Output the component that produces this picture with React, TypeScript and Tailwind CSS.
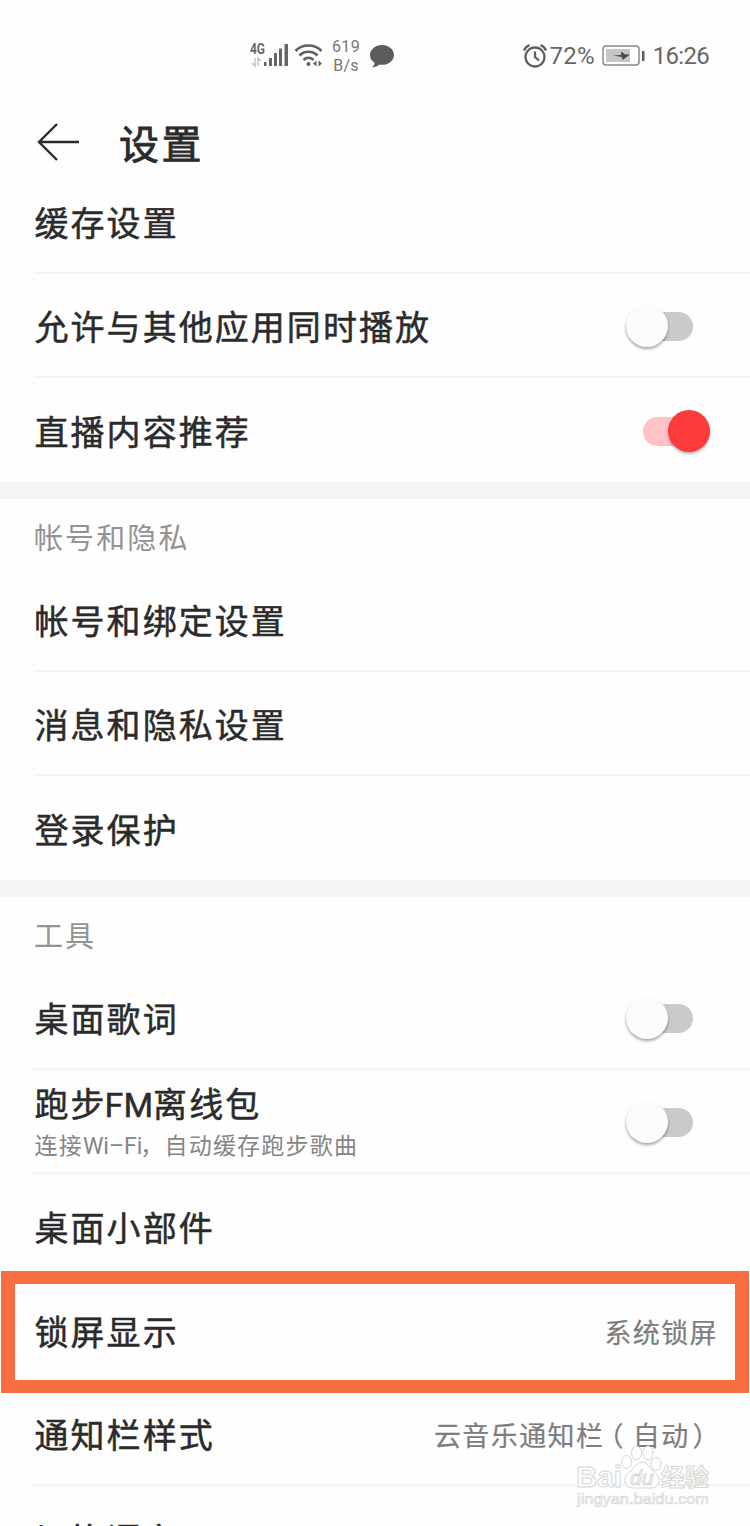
import type { ReactNode } from 'react';

type RowProps = {
	title: ReactNode;
	subtitle?: ReactNode;
	last?: boolean;
	children?: ReactNode;
};

const Toggle = ({ on }: { on?: boolean }) => {
	return on ? (
		<div className="mr-10 mt-[2px] flex h-[29px] w-[67px] items-center justify-end rounded-full bg-[#ffc3c6]">
			<div className="h-[42px] w-[42px] shrink-0 rounded-full bg-[#fd3b3b] shadow-[0_2px_3px_rgba(0,0,0,0.28)]" />
		</div>
	) : (
		<div className="mr-[57px] mt-[2px] flex h-[29px] w-[67px] items-center rounded-full bg-[#cacaca]">
			<div className="h-[42px] w-[42px] shrink-0 rounded-full bg-[#fcfcfc] shadow-[0_2px_3px_rgba(0,0,0,0.35)]" />
		</div>
	);
};

const Row = ({ title, subtitle, last, children }: RowProps) => {
	return (
		<div
			className={
				last
					? 'ml-[34px] flex h-[104px] items-center justify-between'
					: 'ml-[34px] flex h-[104px] items-center justify-between border-b-2 border-[#f5f5f5]'
			}
		>
			<div className="mt-[6px] flex flex-col whitespace-nowrap pl-[0.5px]">
				<span className="text-[34px] leading-[44px] tracking-[2.05px] text-[#2b2b2b] [-webkit-text-stroke:0.5px_#2b2b2b]">
					{title}
				</span>
				{subtitle && (
					<span className="mt-[2px] text-[23px] leading-[36px] tracking-[1.2px] text-[#858585]">
						{subtitle}
					</span>
				)}
			</div>
			{children}
		</div>
	);
};

const SectionLabel = ({ children }: { children: ReactNode }) => {
	return (
		<div className="border-t-[17px] border-[#f4f4f4]">
			<h2 className="flex h-[69px] items-center pl-[34px] pt-[13px] text-[29px] tracking-[2.1px] text-[#939393]">
				{children}
			</h2>
		</div>
	);
};

const Value = ({ children }: { children: ReactNode }) => {
	return (
		<span className="mr-[32px] mt-[8px] whitespace-nowrap text-[27px] tracking-[1.4px] text-[#7d7d7d] [-webkit-text-stroke:0.2px_#7d7d7d]">
			{children}
		</span>
	);
};

const StatusBar = () => {
	return (
		<div className="flex h-28 items-center justify-between pl-[249px] pr-[41px] font-[Roboto] text-[#666]">
			<div className="flex items-center">
				<svg width="40" height="28" viewBox="0 0 40 28" fill="#666">
					<text x="1" y="12" fontSize="14" fontWeight="700" textLength="15" lengthAdjust="spacingAndGlyphs">
						4G
					</text>
					<path d="M6 16v8l-3-3M9 24v-8l3 3" fill="none" stroke="#c4c4c4" strokeWidth="1.5" />
					<path d="M15 20h2.500v4H15zM20 16h3v8h-3zM25 11h3v13h-3zM30 6.500h3V24h-3zM35.500 2H39v22h-3.500z" />
				</svg>
				<svg className="ml-1" width="32" height="28" viewBox="0 0 32 28" fill="none" stroke="#606060" strokeWidth="2.600">
					<path d="M2.500 9c7-7.300 19-7.300 26 0M6.500 13.500c5-5 13-5 18 0M10.500 18c3-2.800 7-2.800 10 0" />
					<circle cx="15.500" cy="22" r="2" fill="#606060" stroke="none" />
					<path d="M23.500 18.500v6l-3.500-3zM25.500 18.500v6l3.500-3z" fill="#606060" stroke="none" />
				</svg>
				<div className="ml-[7px] flex w-7 flex-col text-center text-[16px] leading-[19px] tracking-[0.3px] text-[#777]">
					<span>619</span>
					<span>B/s</span>
				</div>
				<svg className="ml-[9px]" width="26" height="26" viewBox="0 0 26 26" fill="#5c5c5c">
					<path d="M13 2C6.400 2 1 6.500 1 12c0 3.300 1.700 6 4.600 7.800 0 1.700-1 3.200-2.600 4.400 3.200.2 5.700-.9 7.500-2.600.8.200 1.700.2 2.500.2 6.600 0 12-4.400 12-9.900S19.600 2 13 2z" />
				</svg>
			</div>
			<div className="flex items-center">
				<svg width="26" height="26" viewBox="0 0 26 26" fill="none" stroke="#606060" strokeWidth="2.300">
					<circle cx="13" cy="14" r="9.500" />
					<path d="M13 8.500V14l4 3.500M2 7.500C3 5 5 3 7.500 2.200M24 7.500C23 5 21 3 18.500 2.200" />
				</svg>
				<span className="ml-[2px] text-[24px] tracking-[0.2px]">72%</span>
				<svg className="ml-[7px]" width="44" height="22" viewBox="0 0 44 22">
					<rect x="1" y="1" width="36" height="19" rx="3" fill="#fff" stroke="#8a8a8a" strokeWidth="1.500" />
					<rect x="4" y="4" width="24" height="13" fill="#c6c6c6" />
					<path d="M11 10.500 19 10l.500-3.500 3.500 3h5L20.500 15l-.500-3z" fill="#484848" />
					<path d="M40 6h2.500v10H40z" fill="#606060" />
				</svg>
				<span className="ml-[7px] text-[24px] tracking-[-0.7px]">16:26</span>
			</div>
		</div>
	);
};

const Watermark = () => {
	return (
		<svg
			className="absolute right-[38px] top-[57px]"
			width="138"
			height="72"
			viewBox="0 0 138 72"
			fill="#fefefe"
			stroke="#d6d6d6"
			strokeWidth="1"
			fontFamily="'Liberation Sans', 'Noto Sans CJK SC', sans-serif"
		>
			<text x="2" y="48" fontSize="30" fontWeight="700" textLength="46" lengthAdjust="spacingAndGlyphs">
				Bai
			</text>
			<ellipse cx="52.500" cy="23" rx="5" ry="6.500" />
			<ellipse cx="62.500" cy="14" rx="5" ry="7" />
			<ellipse cx="74" cy="14" rx="5" ry="7" />
			<ellipse cx="82" cy="25" rx="5" ry="6.500" />
			<path d="M68 23c-6 0-7 6-11 9-5 3-7 6-6 11 1 7 8 6 17 6s16 1 17-6c1-5-2-8-6-11-4-3-5-9-11-9z" />
			<text x="56" y="46" fontSize="21" fontStyle="italic">
				du
			</text>
			<text x="87" y="47" fontSize="24" fontWeight="700">
				经验
			</text>
			<text x="3" y="65" fontSize="15" strokeWidth="0.700" textLength="132" lengthAdjust="spacingAndGlyphs">
				jingyan.baidu.com
			</text>
		</svg>
	);
};

const App = () => {
	return (
		<div className="h-[1526px] w-[750px] overflow-hidden bg-[#fefefe] font-[Roboto,'Noto_Sans_CJK_SC',sans-serif]">
			<StatusBar />
			<header className="flex h-[58px] items-center pl-[37px]">
				<svg className="mt-[2px]" width="43" height="38" viewBox="0 0 43 38" fill="none" stroke="#2b2b2b" strokeWidth="2.400">
					<path d="M42 19H2M20 1 2 19l18 18" />
				</svg>
				<h1 className="ml-[39px] mt-[9px] text-[40px] tracking-[2.5px] text-[#2b2b2b] [-webkit-text-stroke:0.8px_#2b2b2b]">
					设置
				</h1>
			</header>

			<Row title="缓存设置" />
			<Row title="允许与其他应用同时播放">
				<Toggle />
			</Row>
			<Row title="直播内容推荐" last>
				<Toggle on />
			</Row>

			<SectionLabel>帐号和隐私</SectionLabel>
			<Row title="帐号和绑定设置" />
			<Row title="消息和隐私设置" />
			<Row title="登录保护" last />

			<SectionLabel>工具</SectionLabel>
			<Row title="桌面歌词">
				<Toggle />
			</Row>
			<Row
				title={
					<>
						跑步<span className="-ml-[2px] tracking-[0px]">FM</span>离线包
					</>
				}
				subtitle={
					<>
						连接<span className="tracking-[0px]">Wi–Fi</span>
						<span className="-ml-[2px]">，</span>自动缓存跑步歌曲
					</>
				}
			>
				<Toggle />
			</Row>
			<Row title="桌面小部件" last />
			<div className="relative">
				<Row title="锁屏显示" last>
					<Value>系统锁屏</Value>
				</Row>
				<div className="absolute -top-[7px] left-px h-[122px] w-[748px] border-x-[14px] border-y-[13px] border-[#f96f41]" />
			</div>
			<div className="relative">
				<Row title="通知栏样式">
					<Value>
						云音乐通知栏
						<span className="-ml-[8px] mr-[8px]">（</span>
						自动
						<span className="-mr-[3px] ml-[3px]">）</span>
					</Value>
				</Row>
				<Watermark />
			</div>
			<Row title="切换语言" last />
		</div>
	);
};

export default App;
